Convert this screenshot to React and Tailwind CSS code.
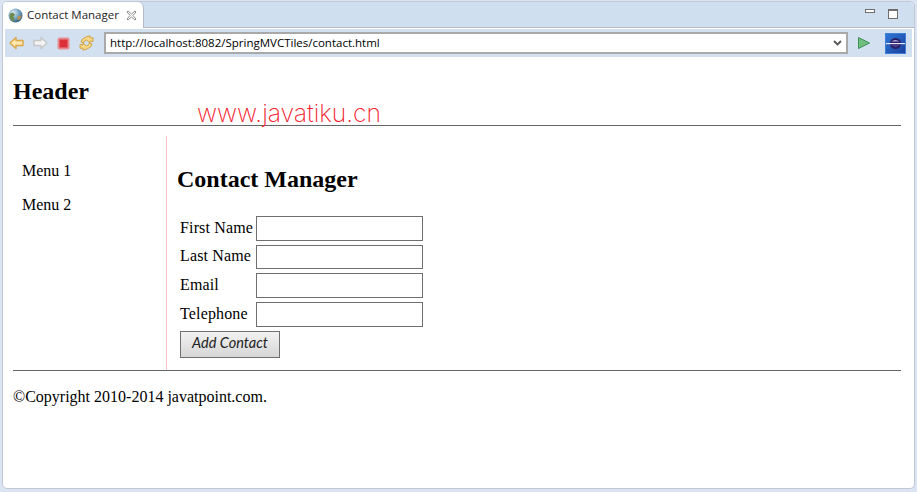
import { useState } from 'react';

const serif = { fontFamily: '"Liberation Serif", serif' };

function GlobeIcon() {
  return (
    <svg width="15" height="15" viewBox="0 0 14 14">
      <defs>
        <radialGradient id="globe" cx="0.35" cy="0.3" r="0.8">
          <stop offset="0" stopColor="#dceaf4" />
          <stop offset="0.55" stopColor="#6f9fbd" />
          <stop offset="1" stopColor="#27506e" />
        </radialGradient>
      </defs>
      <circle cx="7" cy="7" r="6.5" fill="url(#globe)" />
      <path d="M1.5 6 Q3 4 5 4.5 L6.5 6.5 L5 8 L6 10.5 L4.5 12.5 Q1.5 10 1.5 6Z" fill="#6f8a4a" />
      <path d="M9 8 L12.5 7 L11.5 10.5 L9 11.5Z" fill="#b58f4e" />
    </svg>
  );
}

function ArrowIcon({ dir, fill, stroke }) {
  return (
    <svg width="15" height="14" viewBox="0 0 15 14" className={dir === 'right' ? '-scale-x-100' : ''}>
      <path d="M1 7 L7 1.5 V4.5 H14 V9.5 H7 V12.5 Z" fill={fill} stroke={stroke} strokeWidth="1.4" strokeLinejoin="round" />
    </svg>
  );
}

function StopIcon() {
  return (
    <svg width="13" height="13" viewBox="0 0 13 13">
      <rect x="0.5" y="0.5" width="12" height="12" rx="2" fill="#e58d93" />
      <rect x="2.5" y="2.5" width="8" height="8" fill="#dc2f38" />
    </svg>
  );
}

function RefreshIcon() {
  return (
    <svg width="15" height="16" viewBox="0 0 15 16" fill="none">
      <path d="M7 2 L11 0.8 L11 2.8 L14 2.8 L14 6.5 L11 6 L11 7.8 L7.5 5 Q5 5.5 4.5 8 L2 7 Q2.5 3.5 7 2Z" fill="#f8d988" stroke="#cf9c3c" strokeWidth="0.9" strokeLinejoin="round" />
      <path d="M8 14 L4 15.2 L4 13.2 L1 13.2 L1 9.5 L4 10 L4 8.2 L7.5 11 Q10 10.5 10.5 8 L13 9 Q12.5 12.5 8 14Z" fill="#f8d988" stroke="#cf9c3c" strokeWidth="0.9" strokeLinejoin="round" />
    </svg>
  );
}

function BrowserIcon() {
  return (
    <div className="flex h-[21px] w-[21px] items-center justify-center border border-[#3f7fd8] bg-gradient-to-br from-[#2f78d8] to-[#1c3f9c]">
      <svg width="19" height="13" viewBox="0 0 19 13">
        <circle cx="9.5" cy="6.5" r="5.5" fill="#2a1f63" />
        <path d="M5.5 4.5 Q9 1.5 13.5 4.5 Z" fill="#b4a7e6" />
        <path d="M5.5 8.5 Q9 10.5 13.5 8.5 Z" fill="#6d5cc0" />
        <rect x="0" y="6" width="19" height="1.2" fill="#e6e2f7" />
      </svg>
    </div>
  );
}

function Row({ label }) {
  const [value, setValue] = useState('');
  return (
    <div className="flex h-[24.67px] items-center">
      <label className="-mt-[1px] w-[76px] text-base tracking-[0.15px] text-black">{label}</label>
      <input
        value={value}
        onChange={(e) => setValue(e.target.value)}
        className="h-full w-[167px] border border-[#6f6f6f] bg-white outline-none"
      />
    </div>
  );
}

export default function App() {
  return (
    <div className="h-[492px] w-[917px] overflow-hidden bg-[#dbe4f3] px-[2px] pb-[3px] pt-[1px]">
      <div className="relative flex h-full flex-col overflow-hidden rounded-[5px] border border-[#c3c8d2] bg-white" style={serif}>
        {/* tab strip */}
        <div className="flex h-[26px] shrink-0 items-end justify-between border-b border-[#b4bcc9] bg-[#d0dfef]">
          <div className="-mb-px flex h-[26px] w-[141px] items-center rounded-tr-[6px] border-r border-[#b4bcc9] bg-white pl-[5px]">
            <GlobeIcon />
            <span className="ml-[4px] text-[11.5px] text-[#1d1d1d]" style={{ fontFamily: '"Open Sans", sans-serif' }}>Contact Manager</span>
            <svg width="11" height="11" viewBox="0 0 11 11" className="ml-[7px]" fill="none" stroke="#8b8b8b" strokeWidth="1">
              <path d="M1 2 L2 1 L5.5 4 L9 1 L10 2 L7 5.5 L10 9 L9 10 L5.5 7 L2 10 L1 9 L4 5.5 Z" fill="#fff" />
            </svg>
          </div>
          <div className="mr-[16px] flex h-full gap-[13px] pt-[7px]">
            <div className="h-[4px] w-[10px] border border-[#6e6e6e] bg-white" />
            <div className="h-[10px] w-[10px] border border-[#6e6e6e] border-t-2 bg-white" />
          </div>
        </div>

        {/* toolbar */}
        <div className="mx-[2px] mt-px flex h-[28px] shrink-0 items-center bg-[#d2e0f0] pl-[4px]">
          <div className="flex w-[95px] items-center gap-[9px]">
            <ArrowIcon dir="left" fill="#fce7ae" stroke="#dca848" />
            <ArrowIcon dir="right" fill="#f4f4f4" stroke="#c6c6c6" />
            <StopIcon />
            <RefreshIcon />
          </div>
          <div className="flex h-[22px] w-[744px] items-center justify-between border-2 border-[#a9a9a9] bg-white pl-[4px] pr-[4px]">
            <span className="text-[11.5px] text-black" style={{ fontFamily: '"Open Sans", sans-serif' }}>http://localhost:8082/SpringMVCTiles/contact.html</span>
            <svg width="9" height="6" viewBox="0 0 9 6" fill="none" stroke="#555" strokeWidth="1.8">
              <path d="M1 1 L4.5 4.5 L8 1" />
            </svg>
          </div>
          <svg width="14" height="14" viewBox="0 0 14 14" className="ml-[9px]">
            <path d="M1.5 1.5 L12.5 7 L1.5 12.5 Z" fill="#6fc07f" stroke="#3e8f58" />
          </svg>
          <div className="ml-[14px]"><BrowserIcon /></div>
        </div>

        {/* page */}
        <div className="flex flex-1 flex-col pl-[10px] pr-[13px]">
          <div className="h-[68px] pt-[19px]">
            <h1 className="text-2xl leading-[30px] font-bold text-black">Header</h1>
          </div>
          <div className="h-px shrink-0 bg-[#666]" />
          <div className="mt-[10px] flex h-[234px] shrink-0">
            <div className="w-[154px] border-r border-[#ffc0cb] pl-[9px] pt-[25px] text-base text-black">
              <div className="h-[34px] leading-[20px]">Menu 1</div>
              <div className="leading-[20px]">Menu 2</div>
            </div>
            <div className="pl-[10px] pt-[29px]">
              <h2 className="h-[51px] text-2xl leading-[28px] font-bold text-black">Contact Manager</h2>
              <div className="flex flex-col gap-[4px] pl-[3px]">
                <Row label="First Name" />
                <Row label="Last Name" />
                <Row label="Email" />
                <Row label="Telephone" />
                <button
                  className="h-[27px] w-[100px] border border-[#707070] bg-gradient-to-b from-[#f2f2f2] to-[#d6d6d6] pb-[2px] text-[14.5px] text-[#222] italic"
                  style={{ fontFamily: 'Lato, sans-serif' }}
                >
                  Add Contact
                </button>
              </div>
            </div>
          </div>
          <div className="h-px shrink-0 bg-[#666]" />
          <p className="mt-[16px] text-base leading-[20px] text-black">©Copyright 2010-2014 javatpoint.com.</p>
        </div>

        {/* watermark over the page */}
        <span
          className="absolute left-[194px] top-[96px] text-[24.7px] leading-[30px] font-extralight text-[#f5222d]"
          style={{ fontFamily: 'Inter, sans-serif' }}
        >
          www.javatiku.cn
        </span>
      </div>
    </div>
  );
}
